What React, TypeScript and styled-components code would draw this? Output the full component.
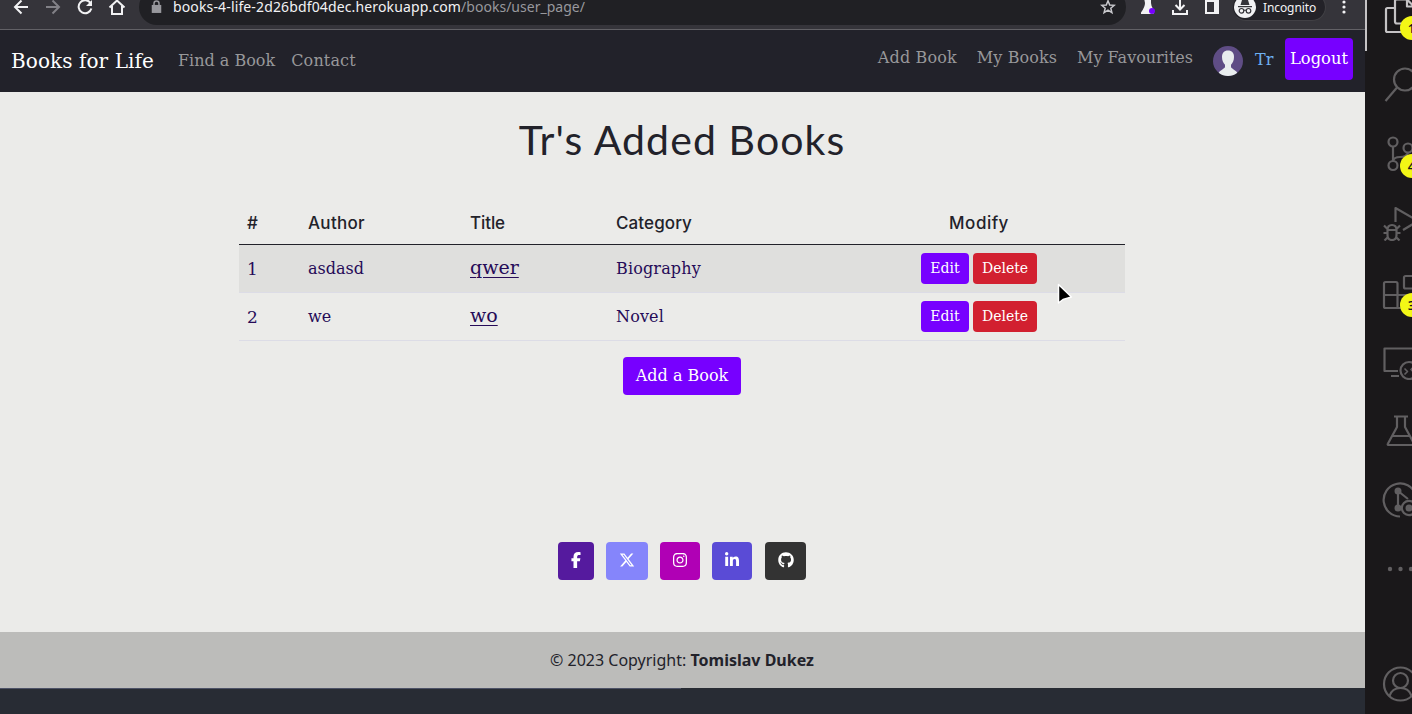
import React from "react";
import styled, { createGlobalStyle } from "styled-components";
import { FaFacebookF, FaXTwitter, FaInstagram, FaLinkedinIn, FaGithub } from "react-icons/fa6";

const sans = '"Noto Sans", "Open Sans", sans-serif';
const slab = '"DejaVu Serif", serif';
const violet = "#7700ff";

const GlobalStyle = createGlobalStyle`
  *, *::before, *::after { box-sizing: border-box; }
  body { margin: 0; background: #282c34; overflow: hidden; }
  a { color: inherit; text-decoration: none; }
  button { font-family: inherit; }
  svg { display: block; flex: none; }
`;

const Screen = styled.div`
  display: flex;
  width: 1412px;
  height: 714px;
  overflow: hidden;
  font-family: ${slab};
  font-size: 16px;
`;

const Browser = styled.div`
  display: flex;
  flex-direction: column;
  width: 1365px;
  height: 714px;
  flex: none;
  background: #282c34;
`;

/* Browser toolbar */

const Chrome = styled.div`
  height: 30px;
  flex: none;
  overflow: hidden;
  background: #35343a;
  border-bottom: 1px solid #626166;
`;

const ChromeRow = styled.div`
  display: flex;
  align-items: center;
  height: 50px;
  margin-top: -18px;
  padding-left: 11px;
  font-family: ${sans};
  color: #f2f2f4;
`;

const NavIcons = styled.div`
  display: flex;
  gap: 12px;
  width: 128px;
  flex: none;
`;

const AddressBar = styled.div`
  display: flex;
  align-items: center;
  width: 987px;
  height: 36px;
  flex: none;
  padding: 0 10px 0 12px;
  border-radius: 18px;
  background: #202024;
`;

const Url = styled.div`
  flex: 1;
  margin-left: 11px;
  font-size: 14px;
  line-height: 20px;
  letter-spacing: 0.14px;
  white-space: nowrap;
`;

const UrlPath = styled.span`
  color: #98989d;
  letter-spacing: 0.02px;
`;

const ChromeActions = styled.div`
  display: flex;
  align-items: center;
  gap: 12px;
  margin-left: 12px;
`;

const Incognito = styled.div`
  display: flex;
  align-items: center;
  gap: 7px;
  width: 94px;
  height: 28px;
  margin-left: -2px;
  padding-left: 1px;
  border: 1px solid #414045;
  border-left-color: #35343a;
  border-radius: 14px;
  background: #232228;
  font-size: 12px;
  letter-spacing: -0.1px;
`;

/* Site */

const Navbar = styled.nav`
  display: flex;
  height: 62px;
  flex: none;
  padding: 0 12px 0 11px;
  background: #22222a;
  color: #98989a;
`;

const Brand = styled.a`
  width: 167px;
  padding-top: 18px;
  font-size: 20px;
  line-height: 26px;
  letter-spacing: 0.08px;
  color: #fff;
  white-space: nowrap;
`;

const NavLink = styled.a<{ $top: number; $space: number; $fit?: number }>`
  padding-top: ${(p) => p.$top}px;
  margin-right: ${(p) => p.$space}px;
  line-height: 24px;
  letter-spacing: ${(p) => p.$fit ?? 0}px;
  white-space: nowrap;
`;

const UserNav = styled.div`
  display: flex;
  margin-left: auto;
`;

const AvatarSlot = styled.div`
  width: 42px;
  padding-top: 16px;
`;

const UserName = styled.a`
  width: 30px;
  padding-top: 18px;
  line-height: 24px;
  color: #6fb1f2;
`;

const Button = styled.button<{ $bg: string }>`
  display: flex;
  align-items: center;
  justify-content: center;
  padding: 0 0 2px;
  border: 0;
  border-radius: 4px;
  background: ${(p) => p.$bg};
  color: #fff;
  white-space: nowrap;
`;

const LogoutButton = styled(Button)`
  width: 68px;
  height: 42px;
  margin-top: 8px;
  font-size: 16.3px;
`;

const Page = styled.main`
  display: flex;
  flex-direction: column;
  align-items: center;
  height: 540px;
  flex: none;
  padding-right: 1px;
  background: #ebebe9;
`;

const Title = styled.h1`
  margin: 24px 0 0;
  height: 86px;
  font: 400 41px/48px Lato, sans-serif;
  letter-spacing: 1.1px;
  color: #22222a;
`;

const Table = styled.div`
  width: 886px;
  color: #260b58;
`;

const Row = styled.div<{ $striped?: boolean }>`
  display: grid;
  grid-template-columns: 61px 162px 146px 225px 292px;
  align-items: center;
  height: 48px;
  border-bottom: 1px solid #dcdce6;
  background: ${(p) => (p.$striped ? "#dfdfdd" : "transparent")};
`;

const HeadRow = styled(Row)`
  height: 43px;
  border-bottom-color: #22222a;
  color: #22222a;
  font-family: Inter, sans-serif;
  font-size: 17px;
  font-weight: 500;
`;

const Cell = styled.div<{ $fit?: number }>`
  padding-left: 8px;
  line-height: 24px;
  letter-spacing: ${(p) => p.$fit ?? 0}px;
`;

const NumberCell = styled(Cell)`
  font-size: 17px;
`;

const ModifyCell = styled(Cell)`
  display: flex;
  justify-content: center;
  gap: 4px;
  padding: 0;
`;

const BookLink = styled.a`
  position: relative;
  top: -1px;
  font-size: 19px;
  text-decoration: underline;
  text-decoration-thickness: 1px;
  text-underline-offset: 3px;
`;

const SmallButton = styled(Button)<{ $width: number }>`
  width: ${(p) => p.$width}px;
  height: 31px;
  font-size: 14px;
`;

const AddButton = styled(Button)`
  width: 118px;
  height: 38px;
  margin-top: 16px;
  font-size: 16px;
`;

const Socials = styled.div`
  display: flex;
  gap: 12px;
  margin-top: auto;
  margin-bottom: 52px;
`;

const SocialButton = styled(Button)<{ $width: number }>`
  width: ${(p) => p.$width}px;
  height: 38px;
  font-size: 16px;
  &:last-child { margin-left: 1px; }
`;

const Footer = styled.footer`
  height: 56px;
  flex: none;
  padding-right: 1px;
  background: #bcbcba;
  color: #22222a;
  font: 16px/56px ${sans};
  text-align: center;
`;

const LoadingLine = styled.div`
  width: 681px;
  height: 1px;
  background: #4d5266;
`;

/* Editor activity bar */

const ActivityBar = styled.aside`
  display: flex;
  width: 47px;
  height: 714px;
  flex: none;
  overflow: hidden;
  background: #1a181a;
`;

const ActiveMark = styled.div`
  width: 2px;
  height: 51px;
  flex: none;
  background: #c5c3c5;
`;

const ActivityList = styled.div`
  display: flex;
  flex-direction: column;
  margin: -19px 0 0 14.5px;
  flex: none;
`;

const Activity = styled.div<{ $active?: boolean }>`
  position: relative;
  display: flex;
  align-items: center;
  width: 36px;
  height: 69.2px;
  flex: none;
  color: ${(p) => (p.$active ? "#c5c3c5" : "#615f61")};
  &:last-child { margin-top: 46px; }
`;

const Badge = styled.span`
  position: absolute;
  left: 18px;
  top: 35px;
  width: 24px;
  height: 24px;
  border-radius: 50%;
  background: #f3f716;
  color: #1a181a;
  font: 600 13px/24px ${sans};
  text-align: center;
`;

const Pointer = styled.svg`
  position: absolute;
  left: 1056px;
  top: 282px;
`;

const Glyph = ({ children, width = 2.2 }: { children: React.ReactNode; width?: number }) => (
  <svg width="36" height="36" viewBox="0 0 36 36" fill="none" stroke="currentColor" strokeWidth={width} strokeLinejoin="round">
    {children}
  </svg>
);

const ToolIcon = ({ children, color = "#f2f2f4" }: { children: React.ReactNode; color?: string }) => (
  <svg width="20" height="20" viewBox="0 0 20 20" fill="none" stroke={color} strokeWidth="2">
    {children}
  </svg>
);

const activities: { badge?: string; icon: React.ReactNode }[] = [
  {
    badge: "1",
    icon: (
      <Glyph>
        <path d="M13 10H5.5Q4 10 4 11.5V32.500Q4 34 5.500 34H21Q23 34 23 32V26M24.500 1.500H14.500Q13 1.500 13 3V23.500Q13 25.500 15 25.500H31Q33 25.500 33 23.500V9.500L25 1.500V8.500H33" />
      </Glyph>
    ),
  },
  {
    icon: (
      <Glyph>
        <circle cx="23" cy="12.500" r="11" />
        <path d="M15 20.500L3.500 34" />
      </Glyph>
    ),
  },
  {
    badge: "4",
    icon: (
      <Glyph>
        <circle cx="11" cy="6" r="4.500" />
        <circle cx="11" cy="29.500" r="4.500" />
        <circle cx="26" cy="12" r="4.500" />
        <path d="M11 10.500V25M11 25Q12 21 18 21Q25 21 26 16.500" />
      </Glyph>
    ),
  },
  {
    icon: (
      <Glyph>
        <path d="M13.500 17V3L36 16L21 25" />
        <path d="M5.500 25Q5.500 20 10 20Q14.500 20 14.500 25V30Q14.500 35 10 35Q5.500 35 5.500 30ZM5.500 25H14.500M5.500 24L2 20.500M14.500 24L18 20.500M5.500 28H1.500M14.500 28H18.500M6 32L2.500 35.500M14 32L17.500 35.500" />
      </Glyph>
    ),
  },
  {
    badge: "3",
    icon: (
      <Glyph>
        <path d="M15.500 21V9.500Q15.500 8 14 8H3.500Q2 8 2 9.500V32.500Q2 34 3.500 34H27Q28.500 34 28.500 32.500V21ZM2 21H15.500V34" />
        <rect x="22" y="2" width="13" height="12.500" rx="1.500" />
      </Glyph>
    ),
  },
  {
    icon: (
      <Glyph>
        <path d="M36 14V4.500H2.500V27H16M9 32H17" />
        <circle cx="27" cy="26.500" r="8.500" />
        <path strokeWidth="1.600" d="M22.500 24.500L25.500 27.500L22.500 30.500M32 22.500L29 25.500L32 28.500" />
      </Glyph>
    ),
  },
  {
    icon: (
      <Glyph>
        <path d="M12 3.500H26M15 3.500V14L6 30.500Q5 32 7 32H31Q33 32 32 30.500L23 14V3.500M10.500 23H27.500" />
      </Glyph>
    ),
  },
  {
    icon: (
      <Glyph>
        <path d="M33.500 12A16.500 16.500 0 1 0 18 34.500M16 9V26M16 9L26 17" />
        <circle cx="16" cy="9" r="2.400" fill="currentColor" />
        <circle cx="16" cy="26" r="2.400" fill="currentColor" />
        <circle cx="27" cy="26" r="7.200" />
        <circle cx="27" cy="26" r="2.400" fill="currentColor" />
      </Glyph>
    ),
  },
  {
    icon: (
      <Glyph width={0}>
        <g fill="currentColor">
          <circle cx="8" cy="18" r="2.200" />
          <circle cx="18.500" cy="18" r="2.200" />
          <circle cx="29" cy="18" r="2.200" />
        </g>
      </Glyph>
    ),
  },
  {
    icon: (
      <Glyph>
        <circle cx="18.500" cy="18" r="16.500" />
        <circle cx="18.500" cy="14.500" r="7.500" />
        <path d="M7.500 30Q10 22 18.500 22Q27 22 29.500 30" />
      </Glyph>
    ),
  },
];

const books = [
  { id: 1, author: "asdasd", title: "qwer", category: "Biography" },
  { id: 2, author: "we", title: "wo", category: "Novel" },
];

const socials = [
  { width: 36, color: "#551a9e", icon: <FaFacebookF /> },
  { width: 42, color: "#8585fb", icon: <FaXTwitter /> },
  { width: 40, color: "#b000b5", icon: <FaInstagram /> },
  { width: 40, color: "#5a4bd6", icon: <FaLinkedinIn /> },
  { width: 41, color: "#333333", icon: <FaGithub /> },
];

const BrowserToolbar = () => (
  <Chrome>
    <ChromeRow>
      <NavIcons>
        <ToolIcon><path d="M17 10H4M10.500 3.500L4 10L10.500 16.500" /></ToolIcon>
        <ToolIcon color="#828187"><path d="M3 10H16M9.500 3.500L16 10L9.500 16.500" /></ToolIcon>
        <ToolIcon>
          <path d="M15.500 6A6.500 6.500 0 1 0 16.400 11.500" />
          <path d="M17 3V9H11Z" fill="#f2f2f4" stroke="none" />
        </ToolIcon>
        <ToolIcon><path d="M2.500 10.500L10 3.500L17.500 10.500M5 9V17H15V9" /></ToolIcon>
      </NavIcons>
      <AddressBar>
        <svg width="11" height="14" viewBox="0 0 11 14" fill="none" stroke="#98989d" strokeWidth="1.500">
          <path d="M3 6V3.500Q3 1 5.500 1Q8 1 8 3.500V6" />
          <rect x="1.500" y="5.700" width="8" height="6.500" fill="#98989d" />
        </svg>
        <Url>books-4-life-2d26bdf04dec.herokuapp.com<UrlPath>/books/user_page/</UrlPath></Url>
        <svg width="16" height="16" viewBox="0 0 16 16" fill="none" stroke="#c9c9cd" strokeWidth="1.500">
          <path d="M8 1.800L9.700 6L14.300 6.300L10.800 9.200L11.900 13.600L8 11.200L4.100 13.600L5.200 9.200L1.700 6.300L6.300 6Z" />
        </svg>
      </AddressBar>
      <ChromeActions>
        <svg width="20" height="20" viewBox="0 0 20 20">
          <path d="M6 1H13V6Q13 9 15.500 13V17H3V15.500Q7 10 7 6Z" fill="#f2f2f4" />
          <circle cx="14" cy="14" r="3" fill={violet} />
        </svg>
        <ToolIcon><path d="M10 1V12M5.500 8L10 12.500L14.500 8M3 13V17H17V13" /></ToolIcon>
        <svg width="20" height="20" viewBox="0 0 20 20">
          <path fill="#f2f2f4" fillRule="evenodd" d="M3 3H17V17H3ZM5 5V15H12V5Z" />
        </svg>
        <Incognito>
          <svg width="22" height="22" viewBox="0 0 22 22">
            <circle cx="11" cy="11" r="11" fill="#f2f2f4" />
            <path d="M6.500 9L8 4Q8.300 3.200 9 3.500L11 4L13 3.500Q13.700 3.200 14 4L15.500 9ZM4 10H18V11.200H4Z" fill="#35343a" />
            <g fill="none" stroke="#35343a" strokeWidth="1.200">
              <circle cx="7.500" cy="14.800" r="2.300" />
              <circle cx="14.500" cy="14.800" r="2.300" />
              <path d="M9.700 14.500Q11 13.500 12.300 14.500" />
            </g>
          </svg>
          Incognito
        </Incognito>
        <svg width="12" height="16" viewBox="0 0 12 16" fill="#f2f2f4">
          <circle cx="6" cy="3" r="1.600" />
          <circle cx="6" cy="8" r="1.600" />
          <circle cx="6" cy="13" r="1.600" />
        </svg>
      </ChromeActions>
    </ChromeRow>
  </Chrome>
);

const Avatar = () => (
  <svg width="30" height="30" viewBox="0 0 30 30">
    <circle cx="15" cy="15" r="15" fill="#5f4d85" />
    <path
      fill="#e9edee"
      d="M15 4.500C11 4.500 9 7 9 11C9 14.500 10.300 17 12 18.800V21C12 22.500 8 23.500 5.700 26.700A15 15 0 0 0 24.300 26.700C22 23.500 18 22.500 18 21V18.800C19.700 17 21 14.500 21 11C21 7 19 4.500 15 4.500Z"
    />
  </svg>
);

export default function App() {
  return (
    <Screen>
      <GlobalStyle />
      <Browser>
        <BrowserToolbar />
        <Navbar>
          <Brand href="#">Books for Life</Brand>
          <NavLink href="#" $top={19} $space={16}>Find a Book</NavLink>
          <NavLink href="#" $top={19} $space={0} $fit={0.15}>Contact</NavLink>
          <UserNav>
            <NavLink href="#" $top={16} $space={20} $fit={0.15}>Add Book</NavLink>
            <NavLink href="#" $top={16} $space={20} $fit={0.1}>My Books</NavLink>
            <NavLink href="#" $top={16} $space={20}>My Favourites</NavLink>
            <AvatarSlot><Avatar /></AvatarSlot>
            <UserName href="#">Tr</UserName>
            <LogoutButton $bg={violet}>Logout</LogoutButton>
          </UserNav>
        </Navbar>
        <Page>
          <Title>Tr's Added Books</Title>
          <Table>
            <HeadRow>
              <Cell>#</Cell>
              <Cell $fit={0.3}>Author</Cell>
              <Cell $fit={-0.1}>Title</Cell>
              <Cell $fit={0.1}>Category</Cell>
              <ModifyCell $fit={0.5}>Modify</ModifyCell>
            </HeadRow>
            {books.map((book, i) => (
              <Row key={book.id} $striped={i % 2 === 0}>
                <NumberCell>{book.id}</NumberCell>
                <Cell>{book.author}</Cell>
                <Cell><BookLink href="#">{book.title}</BookLink></Cell>
                <Cell $fit={0.15}>{book.category}</Cell>
                <ModifyCell>
                  <SmallButton $bg={violet} $width={48}>Edit</SmallButton>
                  <SmallButton $bg="#d22030" $width={64}>Delete</SmallButton>
                </ModifyCell>
              </Row>
            ))}
          </Table>
          <AddButton $bg={violet}>Add a Book</AddButton>
          <Socials>
            {socials.map((s) => (
              <SocialButton key={s.color} $bg={s.color} $width={s.width}>{s.icon}</SocialButton>
            ))}
          </Socials>
        </Page>
        <Footer>© 2023 Copyright: <b>Tomislav Dukez</b></Footer>
        <LoadingLine />
      </Browser>
      <ActivityBar>
        <ActiveMark />
        <ActivityList>
          {activities.map((a, i) => (
            <Activity key={i} $active={i === 0}>
              {a.icon}
              {a.badge && <Badge>{a.badge}</Badge>}
            </Activity>
          ))}
        </ActivityList>
      </ActivityBar>
      <Pointer width="18" height="24" viewBox="0 0 18 24">
        <path d="M2.500 2.500V21L7 17.500L15.500 15Z" fill="#000" stroke="#fff" strokeWidth="1.500" strokeLinejoin="round" />
      </Pointer>
    </Screen>
  );
}
